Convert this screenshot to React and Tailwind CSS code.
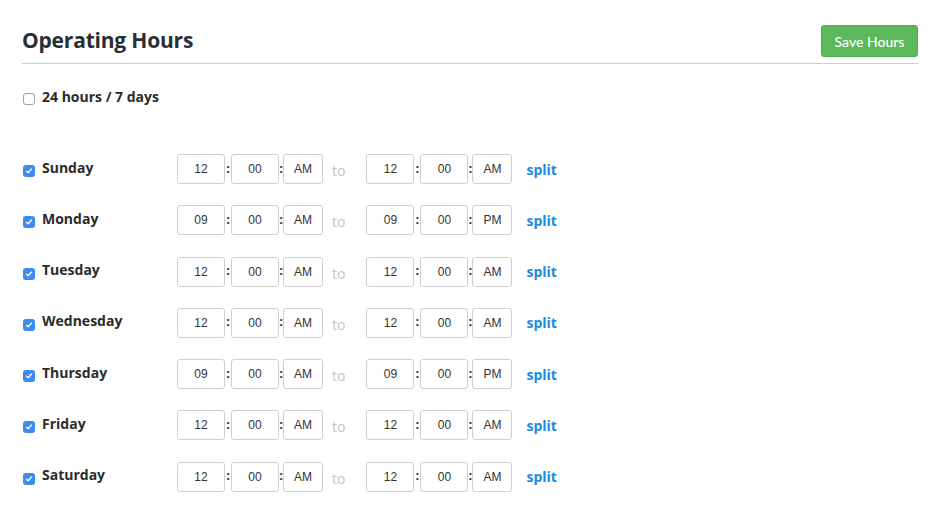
import React from 'react';

const days = [
  { name: 'Sunday', from: ['12', '00', 'AM'], to: ['12', '00', 'AM'] },
  { name: 'Monday', from: ['09', '00', 'AM'], to: ['09', '00', 'PM'] },
  { name: 'Tuesday', from: ['12', '00', 'AM'], to: ['12', '00', 'AM'] },
  { name: 'Wednesday', from: ['12', '00', 'AM'], to: ['12', '00', 'AM'] },
  { name: 'Thursday', from: ['09', '00', 'AM'], to: ['09', '00', 'PM'] },
  { name: 'Friday', from: ['12', '00', 'AM'], to: ['12', '00', 'AM'] },
  { name: 'Saturday', from: ['12', '00', 'AM'], to: ['12', '00', 'AM'] },
];

const Box = ({ value, w }) => (
  <div
    className={`h-[30px] ${w} flex items-center justify-center rounded-[3px] border border-[#cfcfcf] bg-white text-[12px] text-[#333]`}
    style={{ fontFamily: '"Liberation Sans", Arial, sans-serif' }}
  >
    {value}
  </div>
);

const Colon = ({ w }) => (
  <span className={`${w} text-center text-[13px] font-bold leading-none text-[#333] -mt-[2px]`}>:</span>
);

const TimeGroup = ({ time }) => (
  <div className="flex items-center">
    <Box value={time[0]} w="w-[48px]" />
    <Colon w="w-[6px]" />
    <Box value={time[1]} w="w-[48px]" />
    <Colon w="w-[4px]" />
    <Box value={time[2]} w="w-[40px]" />
  </div>
);

const Checked = () => (
  <span className="w-[12px] h-[12px] rounded-[3px] bg-[#3a8cf0] flex items-center justify-center shrink-0">
    <svg width="8" height="8" viewBox="0 0 8 8">
      <path d="M1.5 4.2 L3.2 5.8 L6.5 2" fill="none" stroke="white" strokeWidth="1.3" strokeLinecap="round" strokeLinejoin="round" />
    </svg>
  </span>
);

const App = () => {
  return (
    <div className="min-h-screen bg-white pt-[25px] px-[22px] text-[#2b2b2b]" style={{ fontFamily: '"Open Sans", Lato, sans-serif' }}>
      <div className="w-[896px] flex items-center justify-between pb-[6px] border-b border-[#cccccc]">
        <h1 className="mb-[2px] text-[21px] leading-[28px] font-bold text-[#2a2f36] tracking-[-0.2px]">Operating Hours</h1>
        <button
          className="h-[32px] w-[97px] rounded-[3px] bg-[#5cb85c] border border-[#4fae4f] text-white text-[14px]"
          style={{ fontFamily: 'Lato, sans-serif', fontWeight: 500 }}
        >
          Save Hours
        </button>
      </div>

      <div className="mt-[22px] flex items-center">
        <span className="w-[12px] h-[12px] rounded-[3px] border border-[#a0a0a0] bg-white mt-[5px] ml-[1px]" />
        <span className="ml-[7px] text-[14px] font-bold text-[#2b2b2b]">24 hours / 7 days</span>
      </div>

      <div className="mt-[47px] flex flex-col gap-[21.3px]">
        {days.map((d) => (
          <div key={d.name} className="flex items-center h-[30px]">
            <div className="w-[155px] flex items-center">
              <span className="ml-[1px] mt-[4px]"><Checked /></span>
              <span className="ml-[7px] -mt-[4px] text-[14px] font-bold text-[#2b2b2b]">{d.name}</span>
            </div>
            <TimeGroup time={d.from} />
            <span className="ml-[9px] mr-[21px] mt-[3px] text-[14px] text-[#c4c4c4]">to</span>
            <TimeGroup time={d.to} />
            <span className="ml-[14px] text-[14px] font-bold text-[#1a8ae6]">split</span>
          </div>
        ))}
      </div>
    </div>
  );
};

export default App;
